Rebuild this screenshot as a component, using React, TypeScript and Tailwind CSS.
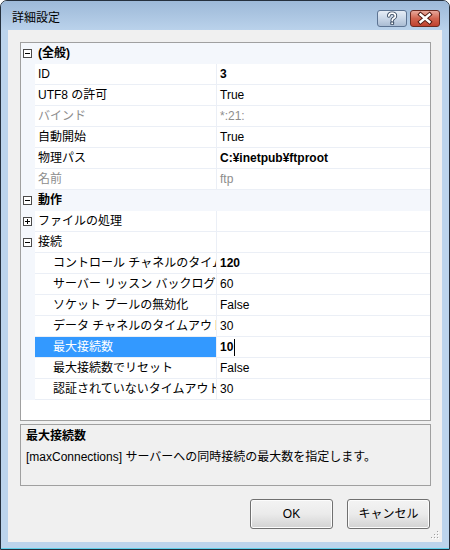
import { ReactNode } from 'react';

type Row =
  | { kind: 'cat'; label: string }
  | { kind: 'group'; label: string; open: boolean }
  | {
      kind: 'prop';
      label: string;
      value: string;
      bold?: boolean;
      gray?: boolean;
      indent?: boolean;
      selected?: boolean;
    };

const rows: Row[] = [
  { kind: 'cat', label: '(全般)' },
  { kind: 'prop', label: 'ID', value: '3', bold: true },
  { kind: 'prop', label: 'UTF8 の許可', value: 'True' },
  { kind: 'prop', label: 'バインド', value: '*:21:', gray: true },
  { kind: 'prop', label: '自動開始', value: 'True' },
  { kind: 'prop', label: '物理パス', value: 'C:¥inetpub¥ftproot', bold: true },
  { kind: 'prop', label: '名前', value: 'ftp', gray: true },
  { kind: 'cat', label: '動作' },
  { kind: 'group', label: 'ファイルの処理', open: false },
  { kind: 'group', label: '接続', open: true },
  { kind: 'prop', label: 'コントロール チャネルのタイムアウト', value: '120', bold: true, indent: true },
  { kind: 'prop', label: 'サーバー リッスン バックログ', value: '60', indent: true },
  { kind: 'prop', label: 'ソケット プールの無効化', value: 'False', indent: true },
  { kind: 'prop', label: 'データ チャネルのタイムアウト', value: '30', indent: true },
  { kind: 'prop', label: '最大接続数', value: '10', bold: true, indent: true, selected: true },
  { kind: 'prop', label: '最大接続数でリセット', value: 'False', indent: true },
  { kind: 'prop', label: '認証されていないタイムアウト', value: '30', indent: true },
];

const ExpandBox = ({ open }: { open: boolean }) => (
  <svg width="9" height="9" viewBox="0 0 9 9" className="block">
    <rect x="0.5" y="0.5" width="8" height="8" fill="#ffffff" stroke="#4a4a4a" />
    <line x1="2" y1="4.5" x2="7" y2="4.5" stroke="#000000" />
    {!open && <line x1="4.5" y1="2" x2="4.5" y2="7" stroke="#000000" />}
  </svg>
);

const Gutter = ({ children }: { children?: ReactNode }) => (
  <div className="w-[14px] shrink-0 bg-[#f4f7fc] flex items-center pl-[2px]">{children}</div>
);

const GridRow = ({ row }: { row: Row }) => {
  if (row.kind === 'cat') {
    return (
      <div className="flex h-[21px] bg-[#f4f7fc]">
        <Gutter>
          <ExpandBox open />
        </Gutter>
        <div className="flex-1 pl-[3px] font-bold leading-[21px]">{row.label}</div>
      </div>
    );
  }
  if (row.kind === 'group') {
    return (
      <div className="flex h-[21px]">
        <Gutter>
          <ExpandBox open={row.open} />
        </Gutter>
        <div className="w-[181px] shrink-0 border-b border-[#ebeff6] pl-[3px] leading-[20px]">
          {row.label}
        </div>
        <div className="w-px bg-[#ebeff6]" />
        <div className="flex-1 border-b border-[#ebeff6]" />
      </div>
    );
  }
  return (
    <div className="flex h-[21px]">
      <Gutter />
      <div
        className={`w-[181px] shrink-0 overflow-hidden whitespace-nowrap border-b border-[#ebeff6] leading-[20px] ${
          row.indent ? 'pl-[18px]' : 'pl-[3px]'
        } ${row.selected ? 'bg-[#3399ff] text-white' : row.gray ? 'text-[#8d8d8d]' : ''}`}
      >
        {row.label}
      </div>
      <div className="w-px bg-[#ebeff6]" />
      <div
        className={`flex-1 flex items-center whitespace-nowrap border-b border-[#ebeff6] pl-[3px] leading-[20px] ${
          row.bold ? 'font-bold' : ''
        } ${row.gray ? 'text-[#8d8d8d]' : ''}`}
      >
        {row.value}
        {row.selected && <span className="ml-px inline-block w-px h-[17px] bg-black" />}
      </div>
    </div>
  );
};

const HelpGlyph = () => (
  <svg width="28" height="15" viewBox="0 0 28 15">
    <path
      d="M10.8 5 Q10.8 2.2 14 2.2 Q17.4 2.2 17.4 4.9 Q17.4 6.6 15.6 7.4 Q14.2 8 14.2 9.6"
      fill="none"
      stroke="#3d4f66"
      strokeWidth="3.6"
      strokeLinecap="round"
    />
    <rect x="12.3" y="10.6" width="3.8" height="3.2" rx="0.6" fill="#3d4f66" />
    <path
      d="M10.8 5 Q10.8 2.2 14 2.2 Q17.4 2.2 17.4 4.9 Q17.4 6.6 15.6 7.4 Q14.2 8 14.2 9.6"
      fill="none"
      stroke="#ffffff"
      strokeWidth="1.7"
      strokeLinecap="round"
    />
    <rect x="13.3" y="11.5" width="1.8" height="1.5" fill="#ffffff" />
  </svg>
);

const CloseGlyph = () => (
  <svg width="28" height="15" viewBox="0 0 28 15">
    <g strokeLinecap="square">
      <line x1="9.5" y1="3.5" x2="18.5" y2="11" stroke="#4f1a12" strokeWidth="4.4" />
      <line x1="18.5" y1="3.5" x2="9.5" y2="11" stroke="#4f1a12" strokeWidth="4.4" />
      <line x1="9.5" y1="3.5" x2="18.5" y2="11" stroke="#ffffff" strokeWidth="2.4" />
      <line x1="18.5" y1="3.5" x2="9.5" y2="11" stroke="#ffffff" strokeWidth="2.4" />
    </g>
  </svg>
);

const SizeGrip = () => (
  <svg width="10" height="10" viewBox="0 0 10 10" className="absolute right-[2px] bottom-[2px]">
    {[
      [7, 1],
      [4, 4],
      [7, 4],
      [1, 7],
      [4, 7],
      [7, 7],
    ].map(([x, y]) => (
      <g key={`${x}-${y}`}>
        <rect x={x + 1} y={y + 1} width="1" height="1" fill="#ffffff" />
        <rect x={x} y={y} width="1" height="1" fill="#a0a0a0" />
      </g>
    ))}
  </svg>
);

const DialogButton = ({ children }: { children: ReactNode }) => (
  <button className="w-[83px] h-[30px] rounded-[3px] border border-[#707070] bg-gradient-to-b from-[#f3f3f3] via-[#ebebeb] to-[#d2d2d2] shadow-[inset_0_0_0_1px_#fcfcfc] text-[12px] text-black">
    {children}
  </button>
);

export default function App() {
  return (
    <div className="w-[450px] h-[550px] flex flex-col rounded-t-[7px] border border-[#25303d] bg-[#bcd4ec] overflow-hidden text-[12px] text-black font-['Liberation_Sans','Noto_Sans_CJK_JP',sans-serif]">
      {/* Title bar */}
      <div className="h-[29px] shrink-0 flex items-start justify-between pl-[11px] pr-[9px] bg-gradient-to-b from-[#9db9d8] to-[#bad2eb]">
        <span className="mt-[9px] text-[12px] leading-[16px]">詳細設定</span>
        <div className="mt-[9px] flex gap-[3px]">
          <div className="w-[30px] h-[17px] rounded-[3px] border border-[#5d7493] bg-gradient-to-b from-[#e6edf6] via-[#c9d7e8] to-[#aabcd3] flex items-center justify-center">
            <HelpGlyph />
          </div>
          <div className="w-[30px] h-[17px] rounded-[3px] border border-[#6b2a20] bg-gradient-to-b from-[#e7a89b] via-[#d0644f] to-[#c0412f] flex items-center justify-center">
            <CloseGlyph />
          </div>
        </div>
      </div>

      {/* Client area */}
      <div className="relative mx-[7px] h-[512px] shrink-0 bg-[#f0f0f0] flex flex-col pl-[12px] pr-[11px] pt-[12px]">
        <div className="h-[379px] border border-[#a0a0a0] bg-white flex flex-col">
          {rows.map((row, i) => (
            <GridRow key={i} row={row} />
          ))}
        </div>

        <div className="mt-[3px] h-[62px] border border-[#a0a0a0] bg-[#f0f0f0] px-[5px] pt-[1px] leading-[21px]">
          <div className="font-bold">最大接続数</div>
          <div>[maxConnections] サーバーへの同時接続の最大数を指定します。</div>
        </div>

        <div className="mt-[13px] flex justify-end gap-[14px] pr-[1px]">
          <DialogButton>OK</DialogButton>
          <DialogButton>キャンセル</DialogButton>
        </div>

        <SizeGrip />
      </div>

      <div className="flex-1" />
      <div className="h-px bg-[#5fd0ea]" />
    </div>
  );
}
